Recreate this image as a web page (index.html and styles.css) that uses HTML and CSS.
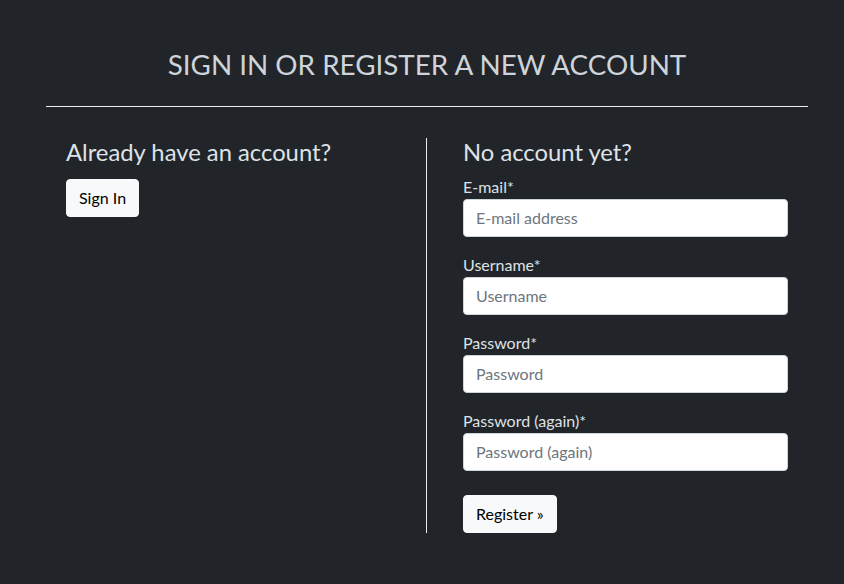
FILE: index.html
```html
<!DOCTYPE html>
<html lang="en">
<head>
<meta charset="utf-8">
<title>Sign in or register</title>
<link rel="stylesheet" href="styles.css">
</head>
<body>
<main class="page">
  <h1 class="title">SIGN IN OR REGISTER A NEW ACCOUNT</h1>
  <hr class="rule">
  <div class="cols">
    <section class="col col-left">
      <h2 class="heading heading-left">Already have an account?</h2>
      <button class="btn" type="button">Sign In</button>
    </section>
    <section class="col col-right">
      <h2 class="heading">No account yet?</h2>
      <form class="form">
        <div class="field">
          <label class="label" for="email">E-mail*</label>
          <input class="input" id="email" type="email" placeholder="E-mail address">
        </div>
        <div class="field">
          <label class="label" for="username">Username*</label>
          <input class="input" id="username" type="text" placeholder="Username">
        </div>
        <div class="field">
          <label class="label" for="password1">Password*</label>
          <input class="input" id="password1" type="password" placeholder="Password">
        </div>
        <div class="field">
          <label class="label" for="password2">Password (again)*</label>
          <input class="input" id="password2" type="password" placeholder="Password (again)">
        </div>
        <button class="btn btn-register" type="submit">Register &raquo;</button>
      </form>
    </section>
  </div>
</main>
</body>
</html>
```

FILE: styles.css
```css
html, body {
  margin: 0;
  padding: 0;
  background: #212529;
  height: 100%;
}

body {
  font-family: Lato, "Open Sans", sans-serif;
  color: #dee2e6;
  font-size: 16px;
  line-height: 1.5;
}

.page {
  margin: 0 36px 0 46px;
}

.title {
  margin: 0;
  padding-top: 48px;
  text-align: center;
  font-size: 27.8px;
  line-height: 1.2;
  font-weight: 400;
  color: #ced4da;
}

.rule {
  margin: 25px 0 0;
  border: 0;
  border-top: 1px solid #e9ecef;
  height: 0;
}

.cols {
  display: grid;
  grid-template-columns: 380px 1fr;
  margin-top: 31px;
}

.col-left {
  padding: 0 20px;
}

.col-right {
  border-left: 1px solid #e9ecef;
  padding: 0 20px 0 36px;
}

.heading {
  margin: 0 0 8px;
  font-size: 23.8px;
  line-height: 1.2;
  font-weight: 400;
  color: #dee2e6;
}

.heading-left {
  margin-bottom: 12px;
}

.btn {
  display: inline-block;
  font-family: Lato, "Open Sans", sans-serif;
  font-size: 16px;
  line-height: 24px;
  padding: 6px 12px;
  color: #000;
  background: #f8f9fa;
  border: 1px solid #f8f9fa;
  border-radius: 4px;
  cursor: pointer;
}

.field {
  display: flex;
  flex-direction: column;
  margin-bottom: 16px;
}

.label {
  font-size: 16px;
  line-height: 24px;
  color: #dee2e6;
}

.input {
  box-sizing: border-box;
  height: 38px;
  width: 100%;
  padding: 6px 12px;
  font-family: Lato, "Open Sans", sans-serif;
  font-size: 16px;
  line-height: 24px;
  color: #212529;
  background: #fff;
  border: 1px solid #ced4da;
  border-radius: 4px;
}

.input::placeholder {
  color: #6c757d;
  opacity: 1;
}

.btn-register {
  margin-top: 8px;
}
```
